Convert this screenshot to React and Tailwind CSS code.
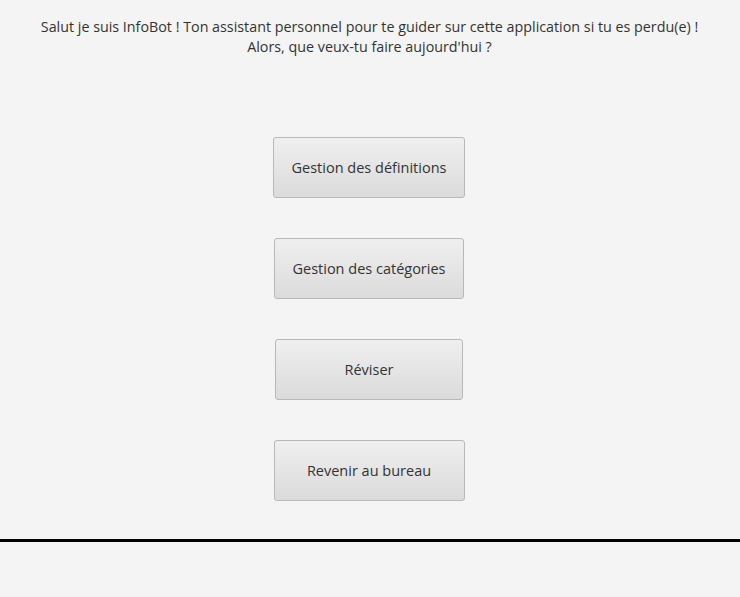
const buttons = [
  { label: "Gestion des définitions", w: "w-[192px]" },
  { label: "Gestion des catégories", w: "w-[190px]" },
  { label: "Réviser", w: "w-[188px]" },
  { label: "Revenir au bureau", w: "w-[191px]" },
]

export default function App() {
  return (
    <div className="w-[740px] h-[597px] bg-[#f4f4f4] text-[#333333] font-['Open_Sans','Noto_Sans',sans-serif] flex flex-col">
      <main className="h-[539px] flex flex-col items-center pt-[17px]">
        <p className="text-center text-[14.3px] leading-[20px] mr-[1px]">
          Salut je suis InfoBot ! Ton assistant personnel pour te guider sur cette application si tu es perdu(e) !
          <br />
          Alors, que veux-tu faire aujourd'hui ?
        </p>
        <div className="flex flex-col items-center gap-[40px] mt-[80px] mr-[2px]">
          {buttons.map((b) => (
            <button
              key={b.label}
              className={`${b.w} h-[61px] rounded-[3px] border border-[#b8b8b8] bg-gradient-to-b from-[#efefef] to-[#dbdbdb] text-[14.5px] text-[#333333]`}
            >
              {b.label}
            </button>
          ))}
        </div>
      </main>
      <div className="h-[3px] bg-black" />
      <div className="flex-1" />
    </div>
  )
}
